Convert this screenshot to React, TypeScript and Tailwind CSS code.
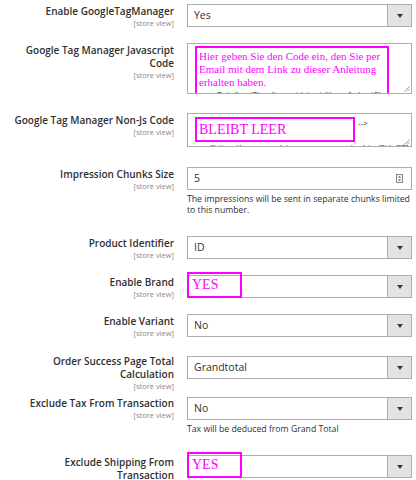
const magenta = 'border-[#ff00ff]'

function ResizeHandle() {
  return (
    <svg className="absolute right-[1px] bottom-[1px]" width="7" height="7" viewBox="0 0 7 7">
      <path d="M6.5 1.5 L1.5 6.5 M6.5 4 L4 6.5" stroke="#9a9a9a" strokeWidth="1" />
    </svg>
  )
}

function FieldLabel({ lines }: { lines: string[] }) {
  return (
    <div className="w-[175px] shrink-0 text-right pt-[1px] pr-[1px]">
      {lines.map((l) => (
        <div key={l} className="text-[10px] leading-[13px] font-semibold text-[#303030] whitespace-nowrap">{l}</div>
      ))}
      <div className="text-[7.5px] leading-[11px] text-[#8a8a8a]">[store view]</div>
    </div>
  )
}

function Select({ value, mark }: { value?: string; mark?: boolean }) {
  return (
    <div className="relative flex h-[23px] border border-[#adadad] bg-white">
      <div className="flex-1 pl-[6px] text-[10.5px] leading-[21px] text-[#303030]">{value}</div>
      <div className="w-[24px] flex items-center justify-center bg-[#e3e3e3] border-l border-[#adadad]">
        <svg width="6" height="4" viewBox="0 0 6 4">
          <path d="M0 0 H6 L3 4 Z" fill="#41362f" />
        </svg>
      </div>
      {mark && (
        <div className={`absolute left-[-1px] top-[-4px] w-[55px] h-[26px] border-2 ${magenta} text-[#ff00ff] text-[14px] leading-[22px] pl-[3px] font-['Liberation_Serif',serif]`}>
          YES
        </div>
      )}
    </div>
  )
}

function Row({ lines, mt, children }: { lines: string[]; mt: string; children: React.ReactNode }) {
  return (
    <div className={`flex items-start ${mt}`}>
      <FieldLabel lines={lines} />
      <div className="ml-[12px] w-[225px] shrink-0">{children}</div>
    </div>
  )
}

export default function App() {
  const jsLine = "new Date().getTime(),event:'gtm.js'});var f=d.getElementsByTagName(s)[0]"
  const nsLine = 'src="https://www.googletagmanager.com/ns.html?id=GTM-XXXX"'
  return (
    <div className="w-[416px] h-[480px] overflow-hidden bg-white font-['Open_Sans',sans-serif]">
      <div className="pt-[4px]">
        <Row lines={['Enable GoogleTagManager']} mt="mt-0">
          <Select value="Yes" />
        </Row>

        <Row lines={['Google Tag Manager Javascript', 'Code']} mt="mt-[14px]">
          <div className="relative h-[51px] border border-[#adadad] overflow-hidden px-[7px] pt-[2px]">
            <div className={`border-2 border-b-0 ${magenta} w-[194px] pt-[2px] pl-[2px]`}>
              <div className="text-[#ff00ff] text-[11px] leading-[13px] font-['Liberation_Serif',serif]">
                <div>Hier geben Sie den Code ein, den Sie per</div>
                <div>Email mit dem Link zu dieser Anleitung</div>
                <div>erhalten haben.</div>
              </div>
              <div className="text-[8px] leading-[9px] text-[#303030] whitespace-nowrap overflow-hidden">{jsLine}</div>
            </div>
            <ResizeHandle />
          </div>
        </Row>

        <Row lines={['Google Tag Manager Non-Js Code']} mt="mt-[19px]">
          <div className="relative h-[34px] border border-[#adadad] overflow-hidden px-[7px] pt-[3px]">
            <div className="flex items-start">
              <div className={`w-[160px] h-[25px] border-2 ${magenta} shrink-0 text-[#ff00ff] text-[14px] leading-[21px] pl-[2px] font-['Liberation_Serif',serif]`}>
                BLEIBT LEER
              </div>
              <div className="ml-[3px] text-[8px] leading-[12px] text-[#303030]">--&gt;</div>
            </div>
            <div className="text-[8px] leading-[9px] text-[#303030] whitespace-nowrap">{nsLine}</div>
            <ResizeHandle />
          </div>
        </Row>

        <Row lines={['Impression Chunks Size']} mt="mt-[20px]">
          <div className="flex items-center h-[23px] border border-[#adadad] pl-[6px] pr-[8px]">
            <div className="flex-1 text-[10.5px] text-[#303030]">5</div>
            <svg width="7" height="9" viewBox="0 0 7 9">
              <rect x="0.5" y="0.5" width="6" height="8" fill="#f4f4f4" stroke="#8a8a8a" />
              <path d="M2 3.5 L3.5 2 L5 3.5 Z M2 5.5 L3.5 7 L5 5.5 Z" fill="#555" />
            </svg>
          </div>
          <div className="mt-[4px] text-[8.7px] leading-[11px] text-[#303030]">
            The impressions will be sent in separate chunks limited to this number.
          </div>
        </Row>

        <Row lines={['Product Identifier']} mt="mt-[20px]">
          <Select value="ID" />
        </Row>

        <Row lines={['Enable Brand']} mt="mt-[14px]">
          <Select mark />
        </Row>

        <Row lines={['Enable Variant']} mt="mt-[14px]">
          <Select value="No" />
        </Row>

        <Row lines={['Order Success Page Total', 'Calculation']} mt="mt-[15px]">
          <div className="pt-[2px]">
            <Select value="Grandtotal" />
          </div>
        </Row>

        <Row lines={['Exclude Tax From Transaction']} mt="mt-[4px]">
          <div className="pt-[1px]">
            <Select value="No" />
          </div>
          <div className="mt-[4px] text-[8.7px] leading-[11px] text-[#303030]">
            Tax will be deduced from Grand Total
          </div>
        </Row>

        <Row lines={['Exclude Shipping From', 'Transaction']} mt="mt-[20px]">
          <Select mark />
        </Row>
      </div>
    </div>
  )
}
